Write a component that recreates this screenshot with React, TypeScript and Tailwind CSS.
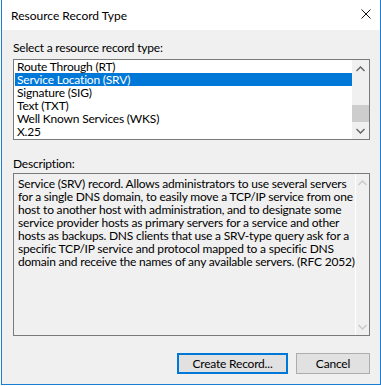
const TYPES = [
  "Route Through (RT)",
  "Service Location (SRV)",
  "Signature (SIG)",
  "Text (TXT)",
  "Well Known Services (WKS)",
  "X.25",
];

const DESC = [
  "Service (SRV) record. Allows administrators to use several servers",
  "for a single DNS domain, to easily move a TCP/IP service from one",
  "host to another host with administration, and to designate some",
  "service provider hosts as primary servers for a service and other",
  "hosts as backups. DNS clients that use a SRV-type query ask for a",
  "specific TCP/IP service and protocol mapped to a specific DNS",
  "domain and receive the names of any available servers. (RFC 2052)",
];

function Chevron({ up, color }: { up?: boolean; color: string }) {
  return (
    <svg width="9" height="6" viewBox="0 0 9 6">
      <path d={up ? "M0.5 5 L4.5 1 L8.5 5" : "M0.5 1 L4.5 5 L8.5 1"} fill="none" stroke={color} strokeWidth="1.3" />
    </svg>
  );
}

export default function App() {
  return (
    <div className="w-[381px] h-[386px] bg-white text-[12px] tracking-[-0.2px] text-black" style={{ fontFamily: "Lato, 'Liberation Sans', sans-serif" }}>
      <div className="ml-[1px] w-[380px] h-[385px] flex flex-col border-x border-b border-[#1a7fd4] bg-[#f0f0f0]">
        {/* title bar */}
        <div className="h-[30px] bg-white flex items-center justify-between pl-[9px] pr-[9px] shrink-0">
          <span className="text-[12px] leading-[15px] tracking-normal">Resource Record Type</span>
          <svg width="10" height="10" viewBox="0 0 10 10" className="mt-[-2px]">
            <path d="M0.5 0.5 L9.5 9.5 M9.5 0.5 L0.5 9.5" stroke="#111" strokeWidth="1" />
          </svg>
        </div>

        <div className="flex-1 flex flex-col pl-[11px] pr-[10px] pt-[10px]">
          <div className="leading-[15px]">Select a resource record type:</div>

          {/* list box */}
          <div className="mt-[4px] h-[81px] border border-[#7a7a7a] bg-white flex">
            <div className="flex-1 pl-[1px]">
              {TYPES.map((t, i) => (
                <div
                  key={t}
                  className={
                    "h-[13px] leading-[13px] pl-[2px] whitespace-nowrap " +
                    (i === 1 ? "bg-[#0078d7] text-white" : "")
                  }
                >
                  {t}
                </div>
              ))}
            </div>
            <div className="w-[17px] bg-[#f0f0f0] flex flex-col">
              <div className="h-[17px] flex items-center justify-center">
                <Chevron up color="#606060" />
              </div>
              <div className="flex-1 flex flex-col justify-end">
                <div className="h-[17px] bg-[#cdcdcd]" />
              </div>
              <div className="h-[17px] flex items-center justify-center">
                <Chevron color="#606060" />
              </div>
            </div>
          </div>

          <div className="mt-[16px] leading-[15px]">Description:</div>

          {/* description */}
          <div className="mt-[2px] h-[163px] border border-[#7a7a7a] bg-[#f0f0f0] flex">
            <div className="flex-1 pl-[4px] pt-[3px] border-r border-white">
              {DESC.map((l) => (
                <div key={l} className="h-[13px] leading-[13px] whitespace-nowrap">
                  {l}
                </div>
              ))}
            </div>
            <div className="w-[17px] flex flex-col justify-between">
              <div className="h-[17px] flex items-center justify-center">
                <Chevron up color="#c8c8c8" />
              </div>
              <div className="h-[17px] flex items-center justify-center">
                <Chevron color="#c8c8c8" />
              </div>
            </div>
          </div>

          <div className="mt-[17px] flex justify-end gap-[8px]">
            <button className="w-[111px] h-[21px] border-2 border-[#0078d7] bg-[#e1e1e1] leading-[15px]">
              Create Record...
            </button>
            <button className="w-[74px] h-[21px] border border-[#adadad] bg-[#e1e1e1] leading-[15px]">
              Cancel
            </button>
          </div>
        </div>
      </div>
    </div>
  );
}
